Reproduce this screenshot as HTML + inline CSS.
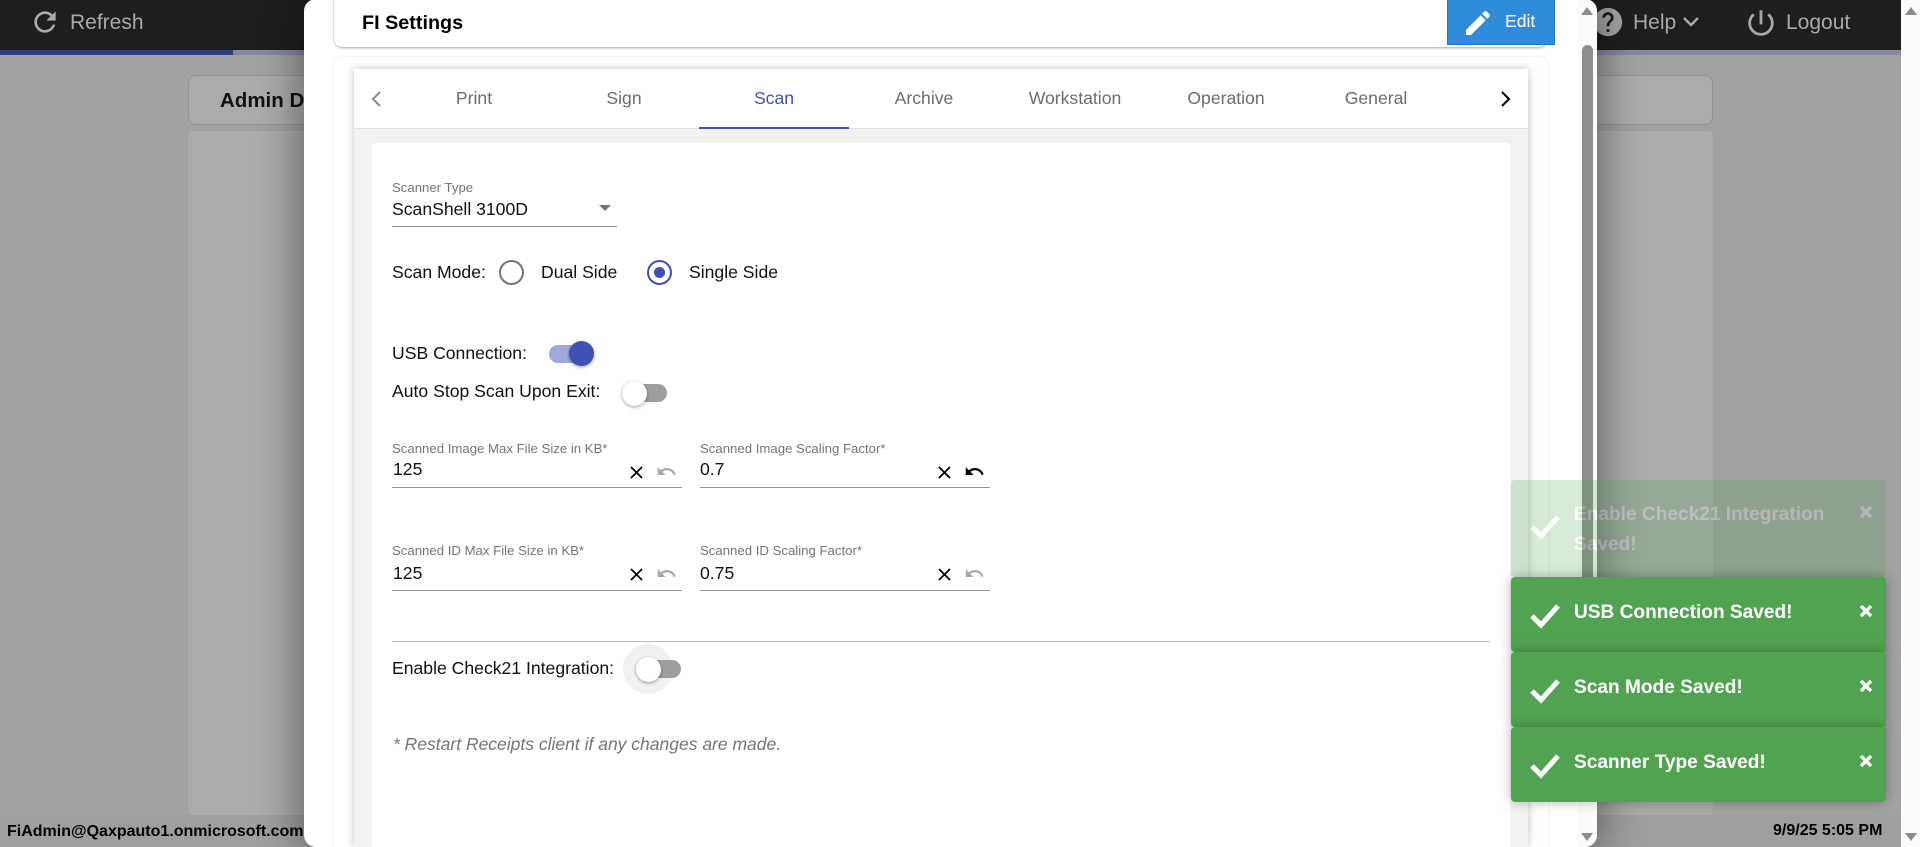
<!DOCTYPE html>
<html><head><meta charset="utf-8"><style>
*{box-sizing:border-box;margin:0;padding:0}
html,body{width:1920px;height:847px;overflow:hidden;background:#a2a2a2;font-family:"Liberation Sans",Arial,sans-serif}
#root{position:relative;width:1920px;height:847px;overflow:hidden;background:#a2a2a2}
.a{position:absolute}
.t{position:absolute;white-space:nowrap;line-height:1}
svg{position:absolute;display:block}
.tab{position:absolute;top:89px;font-size:17.6px;line-height:18px;color:#6c6c6c;text-align:center;width:150px}
.lb{position:absolute;font-size:13.2px;line-height:14px;color:#757575;white-space:nowrap}
.tx{position:absolute;font-size:17.6px;line-height:20px;color:#111;white-space:nowrap}
.ul{position:absolute;height:1px;background:#949494}
.toast{position:absolute;left:1511px;width:375px;height:75px;background:#51a351;border-radius:4px;box-shadow:0 0 12px rgba(0,0,0,.28)}
.toast .m{position:absolute;left:63px;font-size:19.1px;font-weight:bold;color:#fff;white-space:nowrap;line-height:30px}
</style></head><body><div id="root">
<div class="a" style="left:0;top:0;width:1901px;height:50px;background:#1e1e1e"></div>
<div class="a" style="left:0;top:50px;width:1901px;height:5px;background:#85889f"></div>
<div class="a" style="left:0;top:50px;width:233px;height:5px;background:#2f3d80"></div>
<svg style="left:29px;top:6px" width="32" height="32" viewBox="0 0 24 24" fill="#aaa"><path d="M17.65 6.35C16.2 4.9 14.21 4 12 4c-4.42 0-7.99 3.58-7.99 8s3.57 8 7.99 8c3.73 0 6.84-2.55 7.73-6h-2.08c-.82 2.33-3.04 4-5.65 4-3.31 0-6-2.69-6-6s2.69-6 6-6c1.66 0 3.14.69 4.22 1.78L13 11h7V4l-2.35 2.35z"/></svg>
<div class="t" style="left:70px;top:12px;font-size:21px;color:#a9a9a9">Refresh</div>
<svg style="left:1591px;top:5px" width="34" height="34" viewBox="0 0 24 24" fill="#a6a6a6"><path d="M12 2C6.48 2 2 6.48 2 12s4.48 10 10 10 10-4.48 10-10S17.52 2 12 2zm1 17h-2v-2h2v2zm2.07-7.75l-.9.92C13.45 12.9 13 13.5 13 15h-2v-.5c0-1.1.45-2.1 1.17-2.83l1.24-1.26c.37-.36.59-.86.59-1.41 0-1.1-.9-2-2-2s-2 .9-2 2H8c0-2.21 1.79-4 4-4s4 1.79 4 4c0 .88-.36 1.68-.93 2.25z"/></svg>
<div class="t" style="left:1633px;top:12px;font-size:21px;color:#a9a9a9">Help</div>
<svg style="left:1682px;top:16px" width="18" height="12" viewBox="0 0 18 12" fill="none" stroke="#a9a9a9" stroke-width="2.4"><path d="M2 2l7 7 7-7"/></svg>
<svg style="left:1744px;top:6px" width="34" height="34" viewBox="0 0 24 24" fill="#a6a6a6"><path d="M13 3h-2v10h2V3zm4.83 2.17l-1.42 1.42C17.99 7.86 19 9.81 19 12c0 3.87-3.13 7-7 7s-7-3.13-7-7c0-2.19 1.01-4.14 2.58-5.42L6.17 5.17C4.23 6.82 3 9.26 3 12c0 4.97 4.03 9 9 9s9-4.03 9-9c0-2.74-1.23-5.18-3.17-6.83z"/></svg>
<div class="t" style="left:1786px;top:12px;font-size:21px;color:#a9a9a9">Logout</div>

<div class="a" style="left:188px;top:75px;width:1525px;height:50px;background:#ababab;border:1px solid #939393;border-radius:8px"></div>
<div class="t" style="left:220px;top:91px;font-size:20.5px;font-weight:bold;color:#111">Admin Dashboard</div>
<div class="a" style="left:188px;top:131px;width:1525px;height:684px;background:#ababab;border-radius:4px;box-shadow:0 0 1px #959595"></div>
<div class="a" style="left:0;top:815px;width:1901px;height:32px;background:#9f9f9f"></div>
<div class="t" style="left:7px;top:824px;font-size:16px;font-weight:bold;color:#000">FiAdmin@Qaxpauto1.onmicrosoft.com</div>
<div class="t" style="left:1773px;top:823px;font-size:16px;font-weight:bold;color:#000">9/9/25 5:05 PM</div>
<div class="a" style="left:1901px;top:0;width:19px;height:847px;background:#fcfcfc"></div>
<svg style="left:1904px;top:6px" width="14" height="10"><path d="M7 1L13 9H1z" fill="#8c8c8c"/></svg>
<svg style="left:1904px;top:832px" width="14" height="10"><path d="M1 1H13L7 9z" fill="#8c8c8c"/></svg>

<!-- modal -->
<div class="a" style="left:304px;top:-1px;width:1293px;height:848px;background:#fff;border-radius:12px;box-shadow:0 0 40px 6px rgba(0,0,0,.4);overflow:hidden">
<div style="position:absolute;left:1274px;top:0;width:19px;height:848px;background:#fbfbfb"></div>
</div>
<svg style="left:1580px;top:6px" width="14" height="10"><path d="M7 1L13 9H1z" fill="#8c8c8c"/></svg>
<svg style="left:1580px;top:832px" width="14" height="10"><path d="M1 1H13L7 9z" fill="#8c8c8c"/></svg>
<div class="a" style="left:1582px;top:45px;width:11px;height:680px;background:#8d8d8d;border-radius:6px"></div>

<div class="a" style="left:334px;top:-10px;width:1213px;height:57px;background:#fff;border-radius:8px;box-shadow:0 1px 2px rgba(0,0,0,.35)"></div>
<div class="t" style="left:362px;top:14px;font-size:19.8px;font-weight:bold;color:#000">FI Settings</div>
<div class="a" style="left:1447px;top:0;width:108px;height:45px;background:#2f8cdb;border:1px solid #2079c7;border-top:0"></div>
<svg style="left:1462px;top:7px" width="32" height="32" viewBox="0 0 24 24" fill="#fff"><path d="M3 17.25V21h3.75L17.81 9.94l-3.75-3.75L3 17.25zM20.71 7.04c.39-.39.39-1.02 0-1.41l-2.34-2.34c-.39-.39-1.02-.39-1.41 0l-1.83 1.83 3.75 3.75 1.83-1.83z"/></svg>
<div class="t" style="left:1505px;top:13px;font-size:17.6px;color:#fff">Edit</div>

<div class="a" style="left:334px;top:57px;width:1214px;height:790px;background:#fff;border-radius:8px 8px 0 0;box-shadow:0 0 3px rgba(0,0,0,.1)"></div>
<div class="a" style="left:354px;top:69px;width:1174px;height:778px;background:#f2f2f2;box-shadow:0 0 8px rgba(0,0,0,.25)"></div>
<div class="a" style="left:354px;top:69px;width:1174px;height:60px;background:#fff;border-bottom:1px solid #e0e0e0"></div>
<svg style="left:367px;top:89px" width="18" height="20" fill="none" stroke="#8a8a8a" stroke-width="2"><path d="M13 3L6 10l7 7"/></svg>
<svg style="left:1497px;top:89px" width="18" height="20" fill="none" stroke="#000" stroke-width="2"><path d="M5 3l7 7-7 7"/></svg>
<div class="tab" style="left:399px">Print</div>
<div class="tab" style="left:549px">Sign</div>
<div class="tab" style="left:699px;color:#3f51b5">Scan</div>
<div class="tab" style="left:849px">Archive</div>
<div class="tab" style="left:1000px">Workstation</div>
<div class="tab" style="left:1151px">Operation</div>
<div class="tab" style="left:1301px">General</div>
<div class="a" style="left:699px;top:127px;width:150px;height:2px;background:#3f51b5"></div>

<div class="a" style="left:372px;top:143px;width:1138px;height:704px;background:#fff;border-radius:4px 4px 0 0"></div>

<div class="lb" style="left:392px;top:181px">Scanner Type</div>
<div class="tx" style="left:392px;top:199px">ScanShell 3100D</div>
<svg style="left:598px;top:204px" width="14" height="8"><path d="M1 1H13L7 7z" fill="#757575"/></svg>
<div class="ul" style="left:392px;top:226px;width:225px"></div>

<div class="tx" style="left:392px;top:262px">Scan Mode:</div>
<div class="a" style="left:499px;top:260px;width:25px;height:25px;border:2px solid #757575;border-radius:50%"></div>
<div class="tx" style="left:541px;top:262px">Dual Side</div>
<div class="a" style="left:647px;top:260px;width:25px;height:25px;border:2px solid #3f51b5;border-radius:50%"></div>
<div class="a" style="left:654px;top:267px;width:11px;height:11px;background:#3f51b5;border-radius:50%"></div>
<div class="tx" style="left:689px;top:262px">Single Side</div>

<div class="tx" style="left:392px;top:343px">USB Connection:</div>
<div class="a" style="left:549px;top:345px;width:44px;height:18px;background:#9fa8da;border-radius:9px"></div>
<div class="a" style="left:569px;top:341px;width:25px;height:25px;background:#3f51b5;border-radius:50%;box-shadow:0 1px 3px rgba(0,0,0,.4)"></div>
<div class="tx" style="left:392px;top:381px">Auto Stop Scan Upon Exit:</div>
<div class="a" style="left:624px;top:384px;width:43px;height:18px;background:#9e9e9e;border-radius:9px"></div>
<div class="a" style="left:622px;top:381px;width:25px;height:25px;background:#fff;border-radius:50%;box-shadow:0 1px 3px rgba(0,0,0,.4)"></div>

<div class="lb" style="left:392px;top:442px">Scanned Image Max File Size in KB*</div>
<div class="tx" style="left:393px;top:459px">125</div>
<div class="ul" style="left:392px;top:487px;width:290px"></div>
<div class="lb" style="left:700px;top:442px">Scanned Image Scaling Factor*</div>
<div class="tx" style="left:700px;top:459px">0.7</div>
<div class="ul" style="left:700px;top:487px;width:290px"></div>
<div class="lb" style="left:392px;top:544px">Scanned ID Max File Size in KB*</div>
<div class="tx" style="left:393px;top:563px">125</div>
<div class="ul" style="left:392px;top:590px;width:290px"></div>
<div class="lb" style="left:700px;top:544px">Scanned ID Scaling Factor*</div>
<div class="tx" style="left:700px;top:563px">0.75</div>
<div class="ul" style="left:700px;top:590px;width:290px"></div>

<svg style="left:626px;top:461.5px" width="21" height="21" viewBox="0 0 24 24"><path d="M19 6.41L17.59 5 12 10.59 6.41 5 5 6.41 10.59 12 5 17.59 6.41 19 12 13.41 17.59 19 19 17.59 13.41 12z"/></svg>
<svg style="left:934px;top:461.5px" width="21" height="21" viewBox="0 0 24 24"><path d="M19 6.41L17.59 5 12 10.59 6.41 5 5 6.41 10.59 12 5 17.59 6.41 19 12 13.41 17.59 19 19 17.59 13.41 12z"/></svg>
<svg style="left:626px;top:563.5px" width="21" height="21" viewBox="0 0 24 24"><path d="M19 6.41L17.59 5 12 10.59 6.41 5 5 6.41 10.59 12 5 17.59 6.41 19 12 13.41 17.59 19 19 17.59 13.41 12z"/></svg>
<svg style="left:934px;top:563.5px" width="21" height="21" viewBox="0 0 24 24"><path d="M19 6.41L17.59 5 12 10.59 6.41 5 5 6.41 10.59 12 5 17.59 6.41 19 12 13.41 17.59 19 19 17.59 13.41 12z"/></svg>
<svg style="left:656px;top:461px" width="21" height="21" viewBox="0 0 24 24" fill="#a8a8a8"><path d="M12.5 8c-2.65 0-5.05.99-6.9 2.6L2 7v9h9l-3.62-3.62c1.39-1.16 3.16-1.88 5.12-1.88 3.54 0 6.55 2.31 7.6 5.5l2.37-.78C21.08 11.03 17.15 8 12.5 8z"/></svg>
<svg style="left:964px;top:461px" width="21" height="21" viewBox="0 0 24 24" fill="#000"><path d="M12.5 8c-2.65 0-5.05.99-6.9 2.6L2 7v9h9l-3.62-3.62c1.39-1.16 3.16-1.88 5.12-1.88 3.54 0 6.55 2.31 7.6 5.5l2.37-.78C21.08 11.03 17.15 8 12.5 8z"/></svg>
<svg style="left:656px;top:563px" width="21" height="21" viewBox="0 0 24 24" fill="#a8a8a8"><path d="M12.5 8c-2.65 0-5.05.99-6.9 2.6L2 7v9h9l-3.62-3.62c1.39-1.16 3.16-1.88 5.12-1.88 3.54 0 6.55 2.31 7.6 5.5l2.37-.78C21.08 11.03 17.15 8 12.5 8z"/></svg>
<svg style="left:964px;top:563px" width="21" height="21" viewBox="0 0 24 24" fill="#a8a8a8"><path d="M12.5 8c-2.65 0-5.05.99-6.9 2.6L2 7v9h9l-3.62-3.62c1.39-1.16 3.16-1.88 5.12-1.88 3.54 0 6.55 2.31 7.6 5.5l2.37-.78C21.08 11.03 17.15 8 12.5 8z"/></svg>

<div class="a" style="left:392px;top:641px;width:1098px;height:1px;background:#bdbdbd"></div>
<div class="tx" style="left:392px;top:658px">Enable Check21 Integration:</div>
<div class="a" style="left:623px;top:644px;width:50px;height:50px;background:#f1f1f1;border-radius:50%"></div>
<div class="a" style="left:638px;top:660px;width:43px;height:18px;background:#9e9e9e;border-radius:9px"></div>
<div class="a" style="left:636px;top:657px;width:25px;height:25px;background:#fff;border-radius:50%;box-shadow:0 1px 3px rgba(0,0,0,.4)"></div>
<div class="tx" style="left:393px;top:734px;font-size:17.5px;font-style:italic;color:#757575">* Restart Receipts client if any changes are made.</div>

<!-- toasts -->
<div class="toast" style="top:480px;height:97px;opacity:.22;box-shadow:none">
<svg style="left:19px;top:34px" width="30" height="26" fill="none" stroke="#fff" stroke-width="5"><path d="M2 13l9 9L28 3"/></svg>
<div class="m" style="top:20px">Enable Check21 Integration<br>Saved!</div>
<svg style="left:349px;top:26px" width="12" height="12" fill="none" stroke="#fff" stroke-width="3.4"><path d="M1 1l10 10M11 1L1 11"/></svg>
</div>
<div class="toast" style="top:577px">
<svg style="left:19px;top:26px" width="30" height="26" fill="none" stroke="#fff" stroke-width="5"><path d="M2 13l9 9L28 3"/></svg>
<div class="m" style="top:21px">USB Connection Saved!</div>
<svg style="left:349px;top:28px" width="12" height="12" fill="none" stroke="#fff" stroke-width="3.4"><path d="M1 1l10 10M11 1L1 11"/></svg>
</div>
<div class="toast" style="top:652px">
<svg style="left:19px;top:26px" width="30" height="26" fill="none" stroke="#fff" stroke-width="5"><path d="M2 13l9 9L28 3"/></svg>
<div class="m" style="top:21px">Scan Mode Saved!</div>
<svg style="left:349px;top:28px" width="12" height="12" fill="none" stroke="#fff" stroke-width="3.4"><path d="M1 1l10 10M11 1L1 11"/></svg>
</div>
<div class="toast" style="top:727px">
<svg style="left:19px;top:26px" width="30" height="26" fill="none" stroke="#fff" stroke-width="5"><path d="M2 13l9 9L28 3"/></svg>
<div class="m" style="top:21px">Scanner Type Saved!</div>
<svg style="left:349px;top:28px" width="12" height="12" fill="none" stroke="#fff" stroke-width="3.4"><path d="M1 1l10 10M11 1L1 11"/></svg>
</div>
</div></body></html>
